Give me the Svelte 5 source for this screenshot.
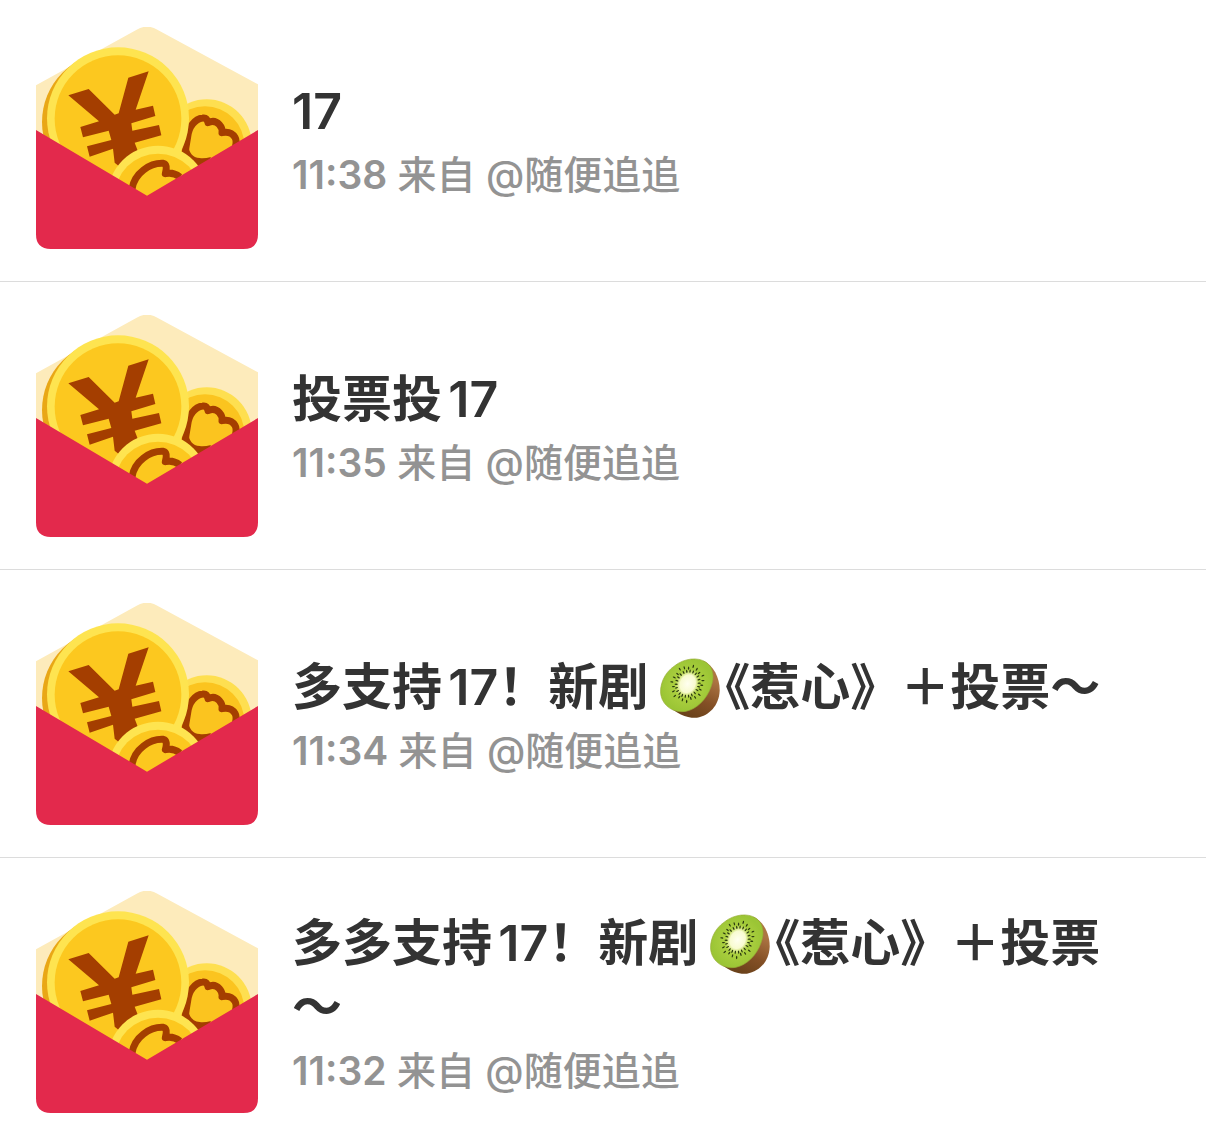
<script>
    let envois = [
        { debut: "17", suite: "", heure: "11:38", qui: "随便追追" },
        { debut: "投票投17", suite: "", heure: "11:35", qui: "随便追追" },
        { debut: "多支持17！新剧", suite: "《惹心》＋投票～", heure: "11:34", qui: "随便追追" },
        { debut: "多多支持17！新剧", suite: "《惹心》＋投票～", heure: "11:32", qui: "随便追追" },
    ];

    // seeds of the kiwi, on two rings round the core
    const graines = Array.from({ length: 44 }, (_, i) => {
        const a = (i / 44) * Math.PI * 2;
        const r = i % 2 ? 34 : 42 + (i % 3) * 3;
        return { x: Math.cos(a) * r, y: Math.sin(a) * r * 1.15, rot: (a * 180) / Math.PI };
    });
</script>

{#snippet enveloppe()}
    <svg class="enveloppe" viewBox="30 32 666 666" aria-hidden="true">
        <!-- back of the envelope -->
        <path d="M30 207 L332 40 Q363 22 394 40 L696 204 V400 H30Z" fill="#fdebbb" />

        <!-- small coin on the right -->
        <circle cx="542" cy="384" r="135" fill="#fedf50" />
        <circle cx="537" cy="388" r="118" fill="#fbc41f" />
        <path
            d="M476 420 Q480 390 485 362 C488 332 506 308 530 305 Q543 303 546 319 Q566 309 580 325 Q590 336 588 349 Q615 343 627 363 Q633 373 628 392"
            fill="none"
            stroke="#a43e00"
            stroke-width="21"
            stroke-linejoin="round"
        />
        <path d="M464 412 L487 385 Q489 422 521 425 Q535 427 555 422 L530 465 L465 440Z" fill="#a43e00" />

        <!-- big coin -->
        <circle cx="257" cy="317" r="209" fill="#e9a716" />
        <circle cx="276" cy="306" r="213" fill="#fee450" />
        <circle cx="276" cy="307" r="190" fill="#fcc81f" />
        <path
            d="M127 237 L188 218 L266 295 L278 291 L307 184 L368 165 L329 280 L381 268 L388 299 L316 321 L319 343 L399 326 L406 357 L326 379 L337 408 L292 460 L266 439 L261 397 L191 421 L183 390 L256 371 L248 343 L171 363 L163 332 L219 315Z"
            fill="#a43e00"
        />

        <!-- coin at the front -->
        <circle cx="396" cy="539" r="151" fill="#fee450" />
        <circle cx="396" cy="542" r="130" fill="#fcc81f" />
        <path
            d="M318 518 C325 470 372 439 412 441 Q426 445 418 472 Q440 466 462 482"
            fill="none"
            stroke="#a43e00"
            stroke-width="21"
            stroke-linejoin="round"
        />

        <!-- front flap -->
        <path d="M30 341 L363 538 L696 341 V654 Q696 698 652 698 H74 Q30 698 30 654Z" fill="#e3294c" />
    </svg>
{/snippet}

{#snippet kiwi()}
    <svg class="kiwi" viewBox="28 20 182 182" role="img" aria-label="🥝">
        <defs>
            <linearGradient id="peau" x1="0.8" y1="0.3" x2="0.5" y2="1">
                <stop offset="0" stop-color="#ad7543" />
                <stop offset="0.55" stop-color="#845026" />
                <stop offset="1" stop-color="#6b421b" />
            </linearGradient>
            <radialGradient id="chair">
                <stop offset="0" stop-color="#d0e070" />
                <stop offset="0.45" stop-color="#acd040" />
                <stop offset="1" stop-color="#9bc535" />
            </radialGradient>
            <radialGradient id="coeur">
                <stop offset="0" stop-color="#fffff0" />
                <stop offset="0.6" stop-color="#f8fbd0" />
                <stop offset="1" stop-color="#dce982" stop-opacity="0" />
            </radialGradient>
        </defs>
        <path d="M50 160 C76 190 112 203 140 201 C178 195 207 163 209 120 C210 80 190 42 160 28Z" fill="url(#peau)" />
        <path
            d="M31 134 C25 105 40 65 72 44 C102 20 143 17 166 32 C188 45 195 76 183 107 C170 145 139 176 105 182 C70 188 38 166 31 134Z"
            fill="url(#chair)"
            stroke="#96ab34"
            stroke-width="2"
        />
        <g transform="translate(112 98) rotate(25)">
            <ellipse rx="37" ry="46" fill="url(#coeur)" />
            {#each graines as g}
                <ellipse rx="5" ry="2" fill="#29380f" transform="translate({g.x} {g.y}) rotate({g.rot})" />
            {/each}
        </g>
    </svg>
{/snippet}

<ul class="liste">
    {#each envois as envoi}
        <li class="envoi">
            {@render enveloppe()}
            <div class="texte">
                <h2 class="titre">
                    {envoi.debut}{#if envoi.suite}{@render kiwi()}{envoi.suite}{/if}
                </h2>
                <p class="source"><time>{envoi.heure}</time> 来自 @{envoi.qui}</p>
            </div>
        </li>
    {/each}
</ul>

<style>
    :global(body) {
        margin: 0;
        background: #fff;
    }
    .liste {
        margin: 0;
        padding: 0;
        list-style: none;
        font-family: Inter, "Noto Sans CJK SC", sans-serif;
        text-autospace: normal;
    }
    .envoi {
        display: flex;
        align-items: center;
        gap: 34px;
        padding: 33px 72px 32px 36px;
        border-bottom: 1px solid #dcdcdc;
    }
    .envoi:first-child {
        padding-top: 27px;
    }
    .envoi:last-child {
        border-bottom: none;
        padding-bottom: 19px;
    }
    .enveloppe {
        flex: none;
        display: block;
        width: 222px;
        height: 222px;
    }
    .texte {
        flex: 1;
        min-width: 0;
    }
    .titre {
        margin: 0 0 10px;
        font-size: 50px;
        line-height: 64px;
        font-weight: 600;
        color: #333;
    }
    .source {
        margin: 0;
        font-size: 39px;
        line-height: 44px;
        font-weight: 500;
        color: #939393;
    }
    .source time {
        font-weight: 600;
    }
    .kiwi {
        width: 60px;
        height: 60px;
        margin: 0 -20px 0 12px;
        vertical-align: -13px;
    }
</style>
